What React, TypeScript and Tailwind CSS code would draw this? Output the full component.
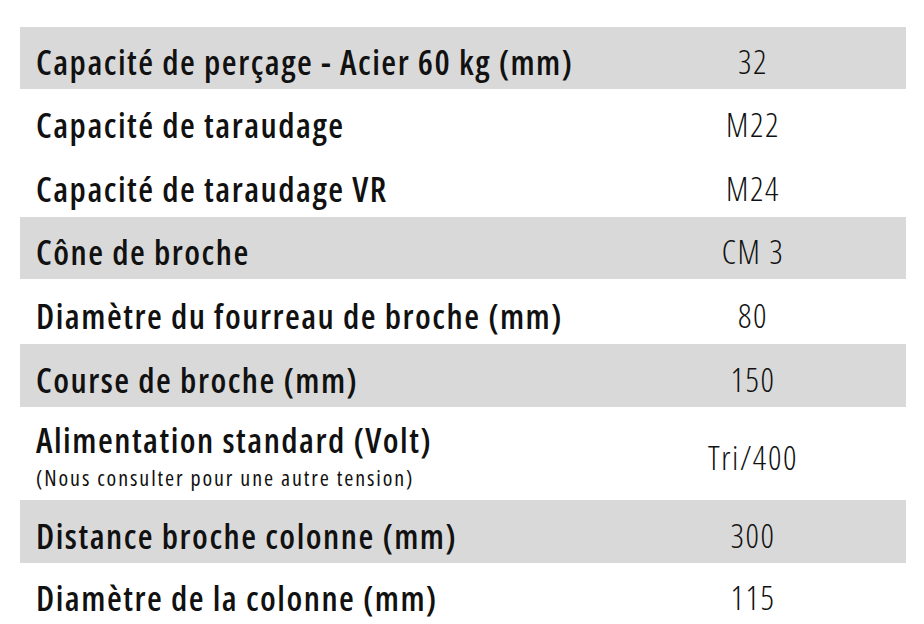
type Row = { label: string; sub?: string; value: string; gray: boolean; h: string };

const rows: Row[] = [
  { label: "Capacité de perçage - Acier 60 kg (mm)", value: "32", gray: true, h: "h-[62px]" },
  { label: "Capacité de taraudage", value: "M22", gray: false, h: "h-[64px]" },
  { label: "Capacité de taraudage VR", value: "M24", gray: false, h: "h-[64px]" },
  { label: "Cône de broche", value: "CM 3", gray: true, h: "h-[62px]" },
  { label: "Diamètre du fourreau de broche (mm)", value: "80", gray: false, h: "h-[65px]" },
  { label: "Course de broche (mm)", value: "150", gray: true, h: "h-[63px]" },
  {
    label: "Alimentation standard (Volt)",
    sub: "(Nous consulter pour une autre tension)",
    value: "Tri/400",
    gray: false,
    h: "h-[93px]",
  },
  { label: "Distance broche colonne (mm)", value: "300", gray: true, h: "h-[63px]" },
  { label: "Diamètre de la colonne (mm)", value: "115", gray: false, h: "h-[61px]" },
];

export default function App() {
  return (
    <div className="w-[924px] h-[624px] overflow-hidden bg-white pt-[27px] font-['Open_Sans',sans-serif] font-stretch-condensed text-[#111111]">
      <div className="ml-[20px] w-[886px] flex flex-col">
        {rows.map((r, i) => (
          <div key={i} className={`flex ${r.h} ${r.gray ? "bg-[#d9d9d9]" : "bg-white"}`}>
            {r.sub ? (
              <div className="flex-1 pl-4 pt-4 flex flex-col">
                <span className="text-[34px] leading-[34px] font-semibold tracking-[1.5px] whitespace-nowrap">{r.label}</span>
                <span className="mt-2 text-[22px] leading-[24px] font-normal tracking-[1.9px] whitespace-nowrap">{r.sub}</span>
              </div>
            ) : (
              <div className="flex-1 pl-4 pt-2 flex items-center">
                <span className="text-[34px] leading-[34px] font-semibold tracking-[1.5px] whitespace-nowrap">{r.label}</span>
              </div>
            )}
            <div className="w-[306px] pt-2 flex items-center justify-center">
              <span className="text-[33px] leading-[34px] font-light tracking-[1.6px] whitespace-nowrap">{r.value}</span>
            </div>
          </div>
        ))}
      </div>
    </div>
  );
}
